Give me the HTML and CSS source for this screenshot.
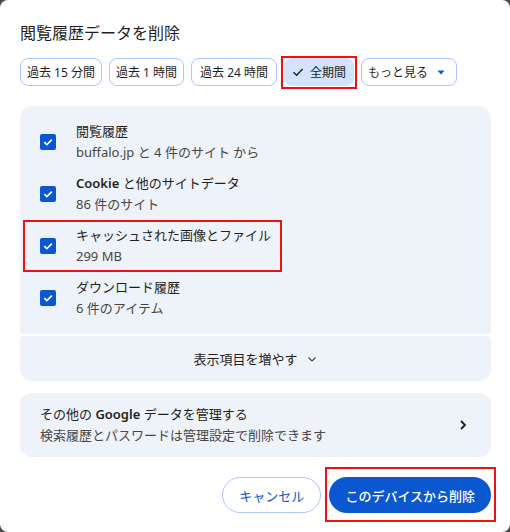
FILE: index.html
```html
<!DOCTYPE html>
<html lang="ja">
<head>
    <meta charset="UTF-8">
    <meta name="viewport" content="width=device-width, initial-scale=1.0">
    <title>閲覧履歴データを削除</title>
    <link rel="stylesheet" href="styles.css">
</head>
<body>

<div class="dialog">
    <h2 class="title">閲覧履歴データを削除</h2>

    <div class="chips">
        <button class="chip">過去 15 分間</button>
        <button class="chip">過去 1 時間</button>
        <button class="chip wide">過去 24 時間</button>
        <button class="chip selected marked">
            <svg width="12" height="12" viewBox="0 0 12 12"><path d="M1.5 6.3 L4.6 9.3 L10.6 3" fill="none" stroke="#1f1f1f" stroke-width="1.4"/></svg>
            全期間
        </button>
        <button class="chip">
            もっと見る
            <svg class="caret" width="8" height="5" viewBox="0 0 8 5"><path d="M0.5 0.5 L7.5 0.5 L4 4.5 Z" fill="#0b57d0"/></svg>
        </button>
    </div>

    <div class="panel">
        <div class="item">
            <span class="check"><svg width="12" height="12" viewBox="0 0 12 12"><path d="M2.3 6.2 L4.9 8.6 L9.8 3.6" fill="none" stroke="#fff" stroke-width="1.6"/></svg></span>
            <div class="text">
                <div class="label">閲覧履歴</div>
                <div class="sub">buffalo.jp と 4 件のサイト から</div>
            </div>
        </div>
        <div class="item">
            <span class="check"><svg width="12" height="12" viewBox="0 0 12 12"><path d="M2.3 6.2 L4.9 8.6 L9.8 3.6" fill="none" stroke="#fff" stroke-width="1.6"/></svg></span>
            <div class="text">
                <div class="label"><span class="latin">Cookie</span> と他のサイトデータ</div>
                <div class="sub">86 件のサイト</div>
            </div>
        </div>
        <div class="item marked-item">
            <span class="check"><svg width="12" height="12" viewBox="0 0 12 12"><path d="M2.3 6.2 L4.9 8.6 L9.8 3.6" fill="none" stroke="#fff" stroke-width="1.6"/></svg></span>
            <div class="text">
                <div class="label">キャッシュされた画像とファイル</div>
                <div class="sub">299 MB</div>
            </div>
        </div>
        <div class="item">
            <span class="check"><svg width="12" height="12" viewBox="0 0 12 12"><path d="M2.3 6.2 L4.9 8.6 L9.8 3.6" fill="none" stroke="#fff" stroke-width="1.6"/></svg></span>
            <div class="text">
                <div class="label">ダウンロード履歴</div>
                <div class="sub">6 件のアイテム</div>
            </div>
        </div>
    </div>

    <div class="more">
        表示項目を増やす
        <svg width="12" height="12" viewBox="0 0 12 12"><path d="M2.5 4.5 L6 8 L9.5 4.5" fill="none" stroke="#474747" stroke-width="1.2"/></svg>
    </div>

    <div class="manage">
        <div class="text">
            <div class="label">その他の <span class="latin">Google</span> データを管理する</div>
            <div class="sub">検索履歴とパスワードは管理設定で削除できます</div>
        </div>
        <svg width="16" height="16" viewBox="0 0 16 16"><path d="M6 4 L10 8 L6 12" fill="none" stroke="#1f1f1f" stroke-width="1.8"/></svg>
    </div>

    <div class="actions">
        <button class="btn cancel">キャンセル</button>
        <button class="btn primary marked-btn">このデバイスから削除</button>
    </div>
</div>

</body>
</html>
```

FILE: styles.css
```css
html, body {
    margin: 0;
    height: 100%;
    background-color: #4a4a4a;
}

body {
    font-family: "Noto Sans", "Noto Sans CJK JP", sans-serif;
    color: #1f1f1f;
}

.dialog {
    box-sizing: border-box;
    height: 532px;
    background-color: #fff;
    border-radius: 8px;
    padding: 21px 19px 0 20px;
}

.title {
    margin: 0;
    font-size: 16px;
    font-weight: normal;
    line-height: 24px;
}

.chips {
    display: flex;
    gap: 7px;
    margin-top: 13px;
}

.chip {
    display: flex;
    align-items: center;
    gap: 6px;
    height: 28px;
    padding: 0 6px;
    border: 1px solid #a8c7fa;
    border-radius: 8px;
    background-color: #fff;
    font-family: inherit;
    font-size: 12px;
    color: #1f1f1f;
    white-space: nowrap;
}

.chip.wide {
    padding: 0 8px;
}

.chip.selected {
    position: relative;
    background-color: #d3e3fd;
    border-color: #d3e3fd;
    padding: 0 7px;
}

.chip .caret {
    margin-left: 3px;
    margin-right: 5px;
}

.marked::after {
    content: "";
    position: absolute;
    left: -4px;
    right: -4px;
    top: -3px;
    bottom: -4px;
    border: 2px solid #ee1111;
}

.panel {
    margin-top: 20px;
    background-color: #eef2f9;
    border-radius: 12px 12px 4px 4px;
    padding: 10px 0;
}

.item {
    position: relative;
    display: flex;
    align-items: center;
    height: 52px;
    padding-left: 20px;
    gap: 20px;
}

.marked-item::after {
    content: "";
    position: absolute;
    left: 3px;
    top: 0;
    width: 255px;
    height: 48px;
    border: 2px solid #ee1111;
}

.check {
    display: flex;
    align-items: center;
    justify-content: center;
    width: 16px;
    height: 16px;
    border-radius: 2px;
    background-color: #0b57d0;
}

.label, .sub {
    font-size: 13px;
    line-height: 21px;
    white-space: nowrap;
}

.sub {
    color: #474747;
}

.latin {
    font-weight: 600;
}

.more {
    display: flex;
    align-items: center;
    justify-content: center;
    gap: 8px;
    height: 45px;
    margin-top: 2px;
    background-color: #eef2f9;
    border-radius: 4px 4px 12px 12px;
    font-size: 13px;
    color: #1f1f1f;
}

.manage {
    display: flex;
    align-items: center;
    justify-content: space-between;
    height: 64px;
    margin-top: 12px;
    padding: 0 20px;
    background-color: #eef2f9;
    border-radius: 12px;
}

.actions {
    display: flex;
    justify-content: flex-end;
    gap: 8px;
    margin-top: 20px;
    padding-right: 0;
}

.btn {
    height: 36px;
    padding: 0 16px;
    border-radius: 18px;
    font-family: inherit;
    font-size: 13px;
    white-space: nowrap;
}

.cancel {
    background-color: #fff;
    border: 1px solid #a8c7fa;
    color: #0b57d0;
}

.primary {
    position: relative;
    background-color: #0b57d0;
    border: none;
    color: #fff;
    font-weight: 500;
}

.marked-btn::after {
    content: "";
    position: absolute;
    left: -4px;
    right: -5px;
    top: -10px;
    bottom: -9px;
    border: 2px solid #ee1111;
}
```
